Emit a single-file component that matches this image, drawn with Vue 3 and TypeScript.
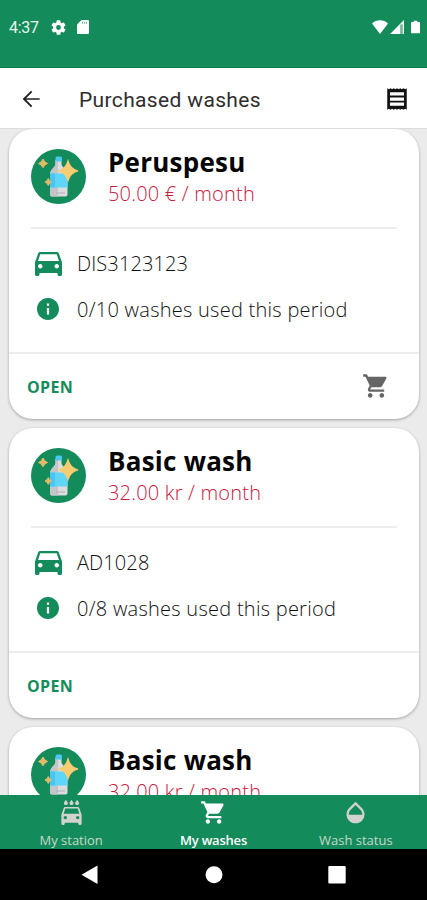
<script setup lang="ts">
interface Wash {
  id: number
  name: string
  price: string
  plate: string
  usage: string
  cart: boolean
}

const washes: Wash[] = [
  { id: 1, name: 'Peruspesu', price: '50.00 € / month', plate: 'DIS3123123', usage: '0/10 washes used this period', cart: true },
  { id: 2, name: 'Basic wash', price: '32.00 kr / month', plate: 'AD1028', usage: '0/8 washes used this period', cart: false },
  { id: 3, name: 'Basic wash', price: '32.00 kr / month', plate: '', usage: '', cart: false },
]

const cartPath =
  'M7 18c-1.1 0-1.99.9-1.99 2S5.9 22 7 22s2-.9 2-2-.9-2-2-2zM1 2v2h2l3.6 7.59-1.35 2.45c-.16.28-.25.61-.25.96 0 1.1.9 2 2 2h12v-2H7.42c-.14 0-.25-.11-.25-.25l.03-.12.9-1.63h7.45c.75 0 1.41-.41 1.75-1.03l3.58-6.49c.08-.14.12-.31.12-.48 0-.55-.45-1-1-1H5.21l-.94-2H1zm16 16c-1.1 0-1.99.9-1.99 2s.89 2 1.99 2 2-.9 2-2-.9-2-2-2z'

const tabs = [
  {
    label: 'My station',
    active: false,
    path: 'M17 5.400c1 0 1.800-.75 1.800-1.700 0-1.100-1.800-2.900-1.800-2.900s-1.800 1.800-1.800 2.900c0 .95.8 1.700 1.800 1.700zm-5 0c1 0 1.800-.75 1.800-1.700 0-1.100-1.800-2.900-1.800-2.900s-1.800 1.800-1.800 2.900c0 .95.8 1.700 1.800 1.700zm-5 0c1 0 1.800-.75 1.800-1.700C8.800 2.600 7 .8 7 .8S5.200 2.600 5.200 3.700c0 .95.8 1.700 1.800 1.700zm11.920 2.610C18.720 7.420 18.160 7 17.500 7h-11c-.66 0-1.210.42-1.420 1.010L3 14v8c0 .55.45 1 1 1h1c.55 0 1-.45 1-1v-1h12v1c0 .55.45 1 1 1h1c.55 0 1-.45 1-1v-8l-2.080-5.990zM6.500 18c-.83 0-1.500-.67-1.500-1.500S5.670 15 6.500 15s1.500.67 1.500 1.500S7.330 18 6.500 18zm11 0c-.83 0-1.500-.67-1.500-1.500s.67-1.500 1.500-1.500 1.500.67 1.500 1.500-.67 1.500-1.500 1.500zM5 13l1.500-4.500h11L19 13H5z',
  },
  { label: 'My washes', active: true, path: cartPath },
  {
    label: 'Wash status',
    active: false,
    path: 'M17.66 8L12 2.350 6.340 8C4.780 9.560 4 11.640 4 13.640s.78 4.110 2.340 5.670 3.610 2.350 5.660 2.350 4.100-.79 5.660-2.350S20 15.640 20 13.640 19.220 9.560 17.660 8zM6 14c.01-2 .62-3.270 1.760-4.400L12 5.270l4.240 4.380C17.380 10.770 17.990 12 18 14H6z',
  },
]
</script>

<template>
  <div class="screen">
    <div class="status">
      <span class="clock">4:37</span>
      <svg class="gear" viewBox="2 2 20 20"><path fill-rule="evenodd" d="M19.140 12.940c.04-.3.060-.61.060-.94s-.02-.64-.07-.94l2.030-1.580a.49.49 0 0 0 .12-.61l-1.920-3.320a.49.49 0 0 0-.59-.22l-2.390.96a7 7 0 0 0-1.620-.94l-.36-2.540A.48.48 0 0 0 13.920 2.400h-3.840a.48.48 0 0 0-.47.41l-.36 2.540a7.400 7.400 0 0 0-1.620.94l-2.390-.96a.48.48 0 0 0-.59.22L2.740 8.870a.47.47 0 0 0 .12.61l2.030 1.580a6 6 0 0 0-.02 1.880l-2.030 1.580a.49.49 0 0 0-.12.61l1.920 3.320c.12.22.37.29.59.22l2.390-.96c.5.38 1.030.7 1.620.94l.36 2.540c.05.24.24.41.48.41h3.840c.24 0 .44-.17.47-.41l.36-2.540a7 7 0 0 0 1.620-.94l2.390.96c.22.08.47 0 .59-.22l1.920-3.320a.47.47 0 0 0-.12-.61zM12 15.200a3.200 3.200 0 1 1 0-6.400 3.200 3.200 0 0 1 0 6.400z" /></svg>
      <svg class="sd" viewBox="0 0 12 14"><path d="M4.500 0H11a1 1 0 0 1 1 1v12a1 1 0 0 1-1 1H1a1 1 0 0 1-1-1V4.500z" /><path class="slots" d="M5.500 1.800v2M7.500 1.800v2M9.500 1.800v2" /></svg>
      <div class="signals">
        <svg class="wifi" viewBox="0 0 16 14"><path d="M0 3.500C4.500-.9 11.500-.9 16 3.500L8 14z" /></svg>
        <svg class="cell" viewBox="0 0 14 14"><path d="M0 14L14 0v14H12.700V4.500h-2.400V14z" /><path class="faint" d="M10.300 4.500h2.400V14h-2.400z" /></svg>
        <svg class="battery" viewBox="0 0 10 14"><path d="M3 0h4v1.500h2a1 1 0 0 1 1 1V13a1 1 0 0 1-1 1H1a1 1 0 0 1-1-1V2.500a1 1 0 0 1 1-1h2z" /></svg>
      </div>
    </div>

    <header class="bar">
      <svg class="back" viewBox="0 0 24 24"><path d="M20 11.200H7.500l5.700-5.700L12 4.300 4.300 12l7.700 7.700 1.200-1.200-5.700-5.700H20z" /></svg>
      <h1>Purchased washes</h1>
      <svg class="receipt" viewBox="0 0 24 24"><path d="M18.500 18.300h-13v-3h13v3zm0-4.800h-13v-3h13v3zm0-4.800h-13v-3h13v3zM3 22l1.500-1 1.500 1 1.500-1L9 22l1.500-1 1.500 1 1.500-1 1.500 1 1.500-1 1.500 1 1.500-1 1.500 1V2l-1.500 1L18 2l-1.500 1L15 2l-1.500 1L12 2l-1.500 1L9 2 7.500 3 6 2 4.500 3 3 2z" /></svg>
    </header>

    <main class="list">
      <article v-for="wash in washes" :key="wash.id" class="card">
        <div class="head">
          <svg class="bottle" viewBox="0 0 55 55">
            <circle cx="27.500" cy="27.500" r="27.500" fill="#148b5b" />
            <path d="M24.500 11h6v4c0 3.500 6 5 6 11v19.500q0 2-2 2H21q-2 0-2-2V26c0-6 5.500-7.500 5.500-11z" fill="#dcdcdf" />
            <path d="M24.500 11h2.500v36.500H21q-2 0-2-2V26c0-6 5.500-7.500 5.500-11z" fill="#c3c5c9" />
            <path d="M19 24.500h17.500v14H19z" fill="#5fd5fa" />
            <path d="M19 24.500h5v14h-5z" fill="#4cc4f2" />
            <rect x="24.500" y="7.500" width="6.500" height="5" rx="1.500" fill="#49c8f0" />
            <path d="M25 44h9" stroke="#b2b2b7" stroke-width="1" />
            <path d="M37 12q2.200 8.200 10 10-7.800 2-10 9.500-2.200-7.500-9.500-9.500 7.300-1.800 9.500-10z" fill="#f7cd73" stroke="#f7cd73" stroke-width="1.200" />
            <path d="M12 10q1.300 3.500 4.500 4.500-3.200 1-4.500 4.300-1.300-3.300-4.500-4.300 3.200-1 4.500-4.500zM17.300 29.500q1 2.700 3.300 3.500-2.300.8-3.300 3.500-1-2.700-3.300-3.500 2.300-.8 3.300-3.500z" fill="#e2bb68" stroke="#e2bb68" stroke-width="1" />
          </svg>
          <div class="titles">
            <h2>{{ wash.name }}</h2>
            <p class="price">{{ wash.price }}</p>
          </div>
        </div>
        <div v-if="wash.plate" class="details">
          <div class="row">
            <svg class="car" viewBox="3 5 18 16"><path d="M18.920 6.010C18.720 5.420 18.160 5 17.500 5h-11c-.66 0-1.210.42-1.420 1.010L3 12v8c0 .55.45 1 1 1h1c.55 0 1-.45 1-1v-1h12v1c0 .55.45 1 1 1h1c.55 0 1-.45 1-1v-8l-2.080-5.990zM6.500 16c-.83 0-1.500-.67-1.500-1.500S5.670 13 6.500 13s1.500.67 1.500 1.500S7.330 16 6.500 16zm11 0c-.83 0-1.500-.67-1.500-1.500s.67-1.500 1.500-1.500 1.500.67 1.500 1.500-.67 1.500-1.500 1.500zM5 11l1.500-4.500h11L19 11H5z" /></svg>
            <span class="plate">{{ wash.plate }}</span>
          </div>
          <div class="row">
            <svg class="info" viewBox="2 2 20 20"><path d="M12 2C6.480 2 2 6.480 2 12s4.480 10 10 10 10-4.480 10-10S17.520 2 12 2zm1 15h-2v-6h2v6zm0-8h-2V7h2v2z" /></svg>
            <span class="usage">{{ wash.usage }}</span>
          </div>
        </div>
        <div v-if="wash.plate" class="actions">
          <button type="button">OPEN</button>
          <svg v-if="wash.cart" class="cart" viewBox="0 0 24 24"><path :d="cartPath" /></svg>
        </div>
      </article>
    </main>

    <nav class="tabs">
      <div v-for="tab in tabs" :key="tab.label" class="tab" :class="{ active: tab.active }">
        <svg viewBox="0 0 24 24"><path :d="tab.path" /></svg>
        <span>{{ tab.label }}</span>
      </div>
    </nav>

    <div class="system">
      <svg viewBox="0 0 18 20"><path d="M16.500.5v18.500L.5 9.800z" /></svg>
      <svg viewBox="0 0 18 20"><circle cx="9" cy="9.800" r="8.500" /></svg>
      <svg viewBox="0 0 18 20"><rect x=".3" y="1" width="17.400" height="17.400" rx="1" /></svg>
    </div>
  </div>
</template>

<style>
body {
  margin: 0;
}
</style>

<style scoped>
.screen {
  width: 427px;
  height: 900px;
  display: flex;
  flex-direction: column;
  overflow: hidden;
  background: #ebebeb;
  font-family: 'Open Sans', 'Noto Sans', sans-serif;
}
svg {
  display: block;
  flex: none;
}
h1,
h2,
p {
  margin: 0;
  white-space: nowrap;
}
.status {
  flex: none;
  box-sizing: border-box;
  height: 68px;
  padding: 17px 7px 0 9px;
  display: flex;
  align-items: flex-start;
  background: #148b5b;
  border-bottom: 1px solid #0c7c4b;
  fill: #fff;
}
.clock {
  width: 42px;
  font: 400 16px/22px Roboto, sans-serif;
  letter-spacing: -0.3px;
  color: #e6f8ee;
}
.gear {
  width: 15px;
  height: 15px;
  margin-top: 3px;
}
.sd {
  width: 12px;
  height: 14px;
  margin: 3px 0 0 11px;
}
.slots {
  stroke: #148b5b;
  stroke-width: 0.6;
}
.signals {
  margin: 3px 0 0 auto;
  display: flex;
}
.wifi {
  width: 16px;
  height: 14px;
}
.cell {
  width: 14px;
  height: 14px;
  margin-left: 2px;
}
.faint {
  opacity: 0.4;
}
.battery {
  width: 9px;
  height: 14px;
  margin-left: 7px;
}
.bar {
  flex: none;
  box-sizing: border-box;
  height: 61px;
  padding: 0 17px 0 18px;
  display: flex;
  align-items: center;
  background: #fff;
  border-bottom: 1px solid #dcdcdc;
}
.back {
  width: 26px;
  height: 26px;
  margin-top: 1px;
  fill: #222;
}
.bar h1 {
  margin: 3px 0 0 35px;
  font: 400 21px/28px Roboto, sans-serif;
  letter-spacing: 0.35px;
  color: #2e2e2e;
}
.receipt {
  width: 26px;
  height: 26px;
  margin: 1px 0 0 auto;
  fill: #111;
}
.list {
  flex: 1;
  min-height: 0;
  overflow: hidden;
  display: flex;
  flex-direction: column;
  gap: 9px;
  padding: 0 8px 0 9px;
}
.card {
  flex: none;
  box-sizing: border-box;
  height: 290px;
  border-radius: 24px;
  background: #fff;
  box-shadow: 0 1px 3px rgba(0, 0, 0, 0.32);
  display: flex;
  flex-direction: column;
}
.head {
  box-sizing: border-box;
  height: 100px;
  margin: 0 22px;
  padding-top: 20px;
  display: flex;
  border-bottom: 2px solid #ededed;
}
.bottle {
  width: 55px;
  height: 55px;
}
.titles {
  margin: -1px 0 0 22px;
}
.titles h2 {
  font-size: 26px;
  line-height: 29px;
  font-weight: 700;
  letter-spacing: 0.25px;
  color: #050505;
}
.price {
  margin-top: 2px;
  font-size: 20px;
  line-height: 30px;
  font-weight: 300;
  letter-spacing: 0.2px;
  color: #c8203f;
}
.details {
  box-sizing: border-box;
  height: 123px;
  padding: 12px 0 0 26px;
}
.row {
  height: 45.500px;
  display: flex;
  align-items: center;
  gap: 15px;
  fill: #148b5b;
  font-size: 20px;
  font-weight: 300;
  letter-spacing: 0.26px;
  color: #111;
  white-space: nowrap;
}
.car {
  width: 27px;
  height: 24px;
}
.info {
  width: 22px;
  height: 22px;
  margin: 0 3px 0 2px;
}
.plate {
  letter-spacing: 0.1px;
}
.actions {
  flex: 1;
  border-top: 2px solid #ededed;
  padding: 0 29px 0 18px;
  display: flex;
  align-items: center;
  justify-content: space-between;
}
button {
  border: 0;
  padding: 0;
  background: none;
  font: 700 16px/22px 'Open Sans', sans-serif;
  letter-spacing: 0.3px;
  color: #148b5b;
}
.cart {
  width: 28px;
  height: 28px;
  margin-top: -2px;
  fill: #666;
}
.tabs {
  flex: none;
  height: 54px;
  display: grid;
  grid-template-columns: repeat(3, 1fr);
  background: #148b5b;
}
.tab {
  display: flex;
  flex-direction: column;
  align-items: center;
  padding-top: 4px;
  font-size: 13px;
  line-height: 18px;
  color: #c4d8c8;
  fill: #d2d3ce;
  white-space: nowrap;
}
.tab svg {
  width: 27px;
  height: 27px;
}
.tab span {
  margin-top: 5px;
}
.tab.active {
  color: #fff;
  fill: #fff;
  font-weight: 600;
  letter-spacing: -0.2px;
}
.system {
  flex: none;
  height: 51px;
  box-sizing: border-box;
  padding: 0 81px;
  display: flex;
  align-items: center;
  justify-content: space-between;
  background: #000;
  fill: #fff;
}
.system svg {
  width: 18px;
  height: 20px;
}
</style>
